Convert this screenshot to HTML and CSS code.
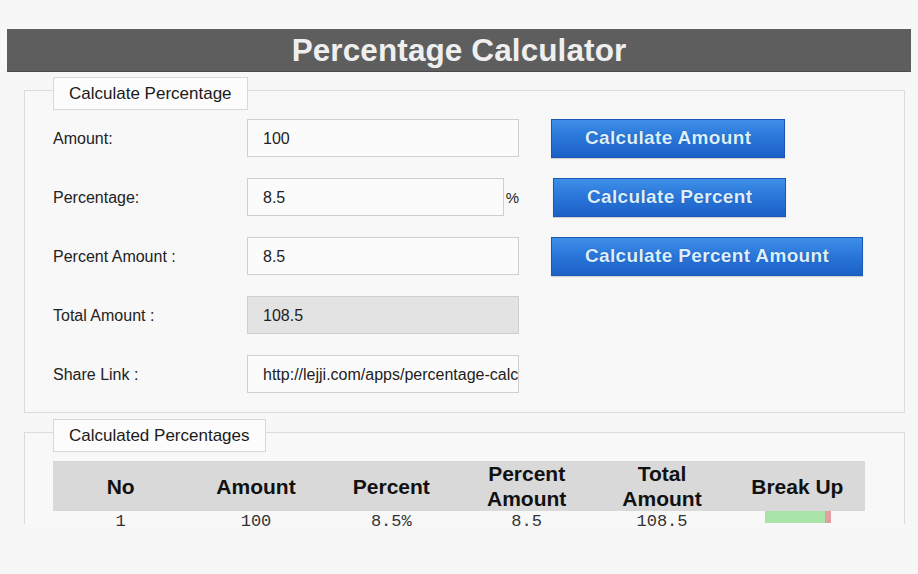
FILE: index.html
```html
<!DOCTYPE html>
<html>
<head>
<meta charset="utf-8">
<title>Percentage Calculator</title>
<link rel="stylesheet" href="styles.css">
</head>
<body>
<div class="page">
  <h1 class="title-bar">Percentage Calculator</h1>

  <div class="panel panel-calc">
    <div class="legend">Calculate Percentage</div>
    <div class="rows">
      <div class="row">
        <label class="lbl">Amount:</label>
        <div class="field"><input class="inp" type="text" value="100"></div>
        <button class="btn">Calculate Amount</button>
      </div>
      <div class="row">
        <label class="lbl">Percentage:</label>
        <div class="field field-pct"><input class="inp inp-short" type="text" value="8.5"><span class="pct">%</span></div>
        <button class="btn btn-pct">Calculate Percent</button>
      </div>
      <div class="row">
        <label class="lbl">Percent Amount :</label>
        <div class="field"><input class="inp" type="text" value="8.5"></div>
        <button class="btn">Calculate Percent Amount</button>
      </div>
      <div class="row">
        <label class="lbl">Total Amount :</label>
        <div class="field"><input class="inp inp-ro" type="text" value="108.5" readonly></div>
      </div>
      <div class="row">
        <label class="lbl">Share Link :</label>
        <div class="field"><input class="inp" type="text" value="http://lejji.com/apps/percentage-calculator"></div>
      </div>
    </div>
  </div>

  <div class="panel panel-list">
    <div class="legend">Calculated Percentages</div>
    <div class="table">
      <div class="thead">
        <div class="th">No</div>
        <div class="th">Amount</div>
        <div class="th">Percent</div>
        <div class="th">Percent<br>Amount</div>
        <div class="th">Total<br>Amount</div>
        <div class="th">Break Up</div>
      </div>
      <div class="trow">
        <div class="td">1</div>
        <div class="td">100</div>
        <div class="td">8.5%</div>
        <div class="td">8.5</div>
        <div class="td">108.5</div>
        <div class="td td-bar"><div class="bar"><span class="bar-base" style="width:60px"></span><span class="bar-pct" style="width:6px"></span></div></div>
      </div>
    </div>
  </div>
</div>
</body>
</html>
```

FILE: styles.css
```css
* { box-sizing: border-box; }
html, body { margin: 0; padding: 0; }
body {
  background: #f7f7f7;
  font-family: "Liberation Sans", Arial, sans-serif;
  color: #222;
  width: 918px;
  height: 574px;
  overflow: hidden;
}
.page { padding-top: 29px; }

.title-bar {
  margin: 0 7px;
  height: 43px;
  background: #5e5e5e;
  color: #efefef;
  font-size: 31.5px;
  font-weight: bold;
  line-height: 43px;
  text-align: center;
  letter-spacing: 0.1px;
  border-bottom: 1px solid #4a4a4a;
}

.panel {
  margin: 0 13px 0 24px;
  border: 1px solid #dcdcdc;
  background: #f8f8f8;
  padding-left: 28px;
}
.panel-calc { margin-top: 18px; padding-bottom: 19px; }
.panel-list {
  margin-top: 19px;
  height: 92px;
  border-bottom: none;
}

.legend {
  display: inline-block;
  margin-top: -14px;
  height: 33px;
  padding: 0 15px;
  background: #fcfcfc;
  border: 1px solid #d8d8d8;
  font-size: 17px;
  line-height: 31px;
  color: #1a1a1a;
  vertical-align: top;
}

.rows {
  display: flex;
  flex-direction: column;
  gap: 21px;
  margin-top: 9px;
}
.row {
  display: flex;
  align-items: center;
  height: 38px;
}
.lbl {
  width: 194px;
  font-size: 16px;
  color: #222;
  padding-top: 1px;
}
.field {
  width: 272px;
  display: flex;
  align-items: center;
}
.inp {
  width: 272px;
  height: 38px;
  border: 1px solid #cfcfcf;
  background: #fbfbfb;
  padding: 1px 0 0 15px;
  font-family: "Liberation Sans", Arial, sans-serif;
  font-size: 16px;
  color: #222;
  outline: none;
}
.inp-short { width: 258px; }
.inp-ro { background: #e3e3e3; }
.pct {
  margin-left: 2px;
  font-size: 15px;
  color: #222;
}

.btn {
  margin-left: 32px;
  height: 39px;
  padding: 0 33px;
  border: 1px solid #1b58b8;
  background: linear-gradient(#3f8fe8, #2a77da 45%, #1c60c6);
  color: #dcefff;
  font-family: "Liberation Sans", Arial, sans-serif;
  font-size: 19px;
  font-weight: bold;
  letter-spacing: 0.35px;
  text-shadow: 0 0 1px rgba(0, 30, 90, 0.6);
  box-shadow: 0 1px 1px rgba(0, 0, 0, 0.15);
}
.btn-pct { margin-left: 34px; }

.table {
  width: 812px;
  margin-top: 9px;
}
.thead {
  display: grid;
  grid-template-columns: repeat(6, 1fr);
  height: 50px;
  background: #d9d9d9;
}
.th {
  display: flex;
  align-items: center;
  justify-content: center;
  text-align: center;
  font-size: 21px;
  font-weight: bold;
  line-height: 25px;
  color: #111;
  padding-bottom: 6px;
}
.trow {
  display: grid;
  grid-template-columns: repeat(6, 1fr);
  height: 22px;
}
.td {
  text-align: center;
  font-family: "Liberation Mono", "Courier New", monospace;
  font-size: 17px;
  line-height: 22px;
  color: #333;
}
.td-bar { display: flex; justify-content: center; }
.bar { display: flex; height: 12px; margin-left: 1px; }
.bar-base { display: block; height: 12px; background: #a8e4a8; }
.bar-pct { display: block; height: 12px; background: #e0a0a0; }
```
